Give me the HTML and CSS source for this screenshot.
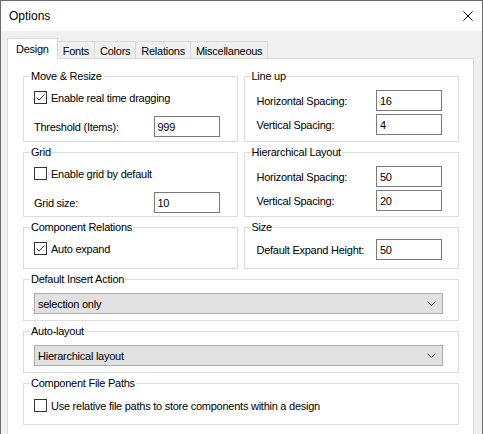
FILE: index.html
```html
<!doctype html>
<html>
<head>
<title>Options</title>
<link rel="stylesheet" href="styles.css">
</head>
<body>
<div class="window">
	<div class="titlebar">
		<span class="title">Options</span>
		<svg class="close" width="10" height="10" viewBox="0 0 10 10"><path d="M0.5 0.5 L9.5 9.5 M9.5 0.5 L0.5 9.5" stroke="#000" stroke-width="1" fill="none"/></svg>
	</div>
	<div class="tabs">
		<div class="tab selected">Design</div>
		<div class="tab">Fonts</div>
		<div class="tab">Colors</div>
		<div class="tab">Relations</div>
		<div class="tab">Miscellaneous</div>
	</div>
	<div class="panel">
		<div class="row">
			<div class="group left move">
				<span class="group-title">Move &amp; Resize</span>
				<label class="check"><span class="box checked"><svg width="11" height="11" viewBox="0 0 11 11"><path d="M1.5 5.5 L4 8 L9.5 2.5" stroke="#333" fill="none"/></svg></span>Enable real time dragging</label>
				<div class="field next"><span>Threshold (Items):</span><div class="input">999</div></div>
			</div>
			<div class="group right spacing">
				<span class="group-title">Line up</span>
				<div class="field"><span>Horizontal Spacing:</span><div class="input">16</div></div>
				<div class="field near"><span>Vertical Spacing:</span><div class="input">4</div></div>
			</div>
		</div>
		<div class="row">
			<div class="group left move">
				<span class="group-title">Grid</span>
				<label class="check"><span class="box"></span>Enable grid by default</label>
				<div class="field next"><span>Grid size:</span><div class="input">10</div></div>
			</div>
			<div class="group right spacing">
				<span class="group-title">Hierarchical Layout</span>
				<div class="field"><span>Horizontal Spacing:</span><div class="input">50</div></div>
				<div class="field near"><span>Vertical Spacing:</span><div class="input">20</div></div>
			</div>
		</div>
		<div class="row short">
			<div class="group left">
				<span class="group-title">Component Relations</span>
				<label class="check"><span class="box checked"><svg width="11" height="11" viewBox="0 0 11 11"><path d="M1.5 5.5 L4 8 L9.5 2.5" stroke="#333" fill="none"/></svg></span>Auto expand</label>
			</div>
			<div class="group right size">
				<span class="group-title">Size</span>
				<div class="field"><span>Default Expand Height:</span><div class="input">50</div></div>
			</div>
		</div>
		<div class="group wide">
			<span class="group-title">Default Insert Action</span>
			<div class="combo"><span>selection only</span><svg width="9" height="5" viewBox="0 0 9 5"><path d="M0.5 0.5 L4.5 4.5 L8.5 0.5" stroke="#555" fill="none"/></svg></div>
		</div>
		<div class="group wide">
			<span class="group-title">Auto-layout</span>
			<div class="combo"><span>Hierarchical layout</span><svg width="9" height="5" viewBox="0 0 9 5"><path d="M0.5 0.5 L4.5 4.5 L8.5 0.5" stroke="#555" fill="none"/></svg></div>
		</div>
		<div class="group wide paths">
			<span class="group-title">Component File Paths</span>
			<label class="check"><span class="box"></span>Use relative file paths to store components within a design</label>
		</div>
	</div>
</div>
</body>
</html>
```

FILE: styles.css
```css
* {
	box-sizing: border-box;
	margin: 0;
	padding: 0;
}

body {
	font-family: "Liberation Sans", Arial, sans-serif;
	font-size: 11px;
	letter-spacing: -0.25px;
	color: #000;
}

.window {
	width: 483px;
	height: 434px;
	overflow: hidden;
	background: #f0f0f0;
	border: 1px solid #6b6b6b;
	border-bottom: none;
}

.titlebar {
	align-items: center;
	background: #fff;
	display: flex;
	height: 30px;
	justify-content: space-between;
	padding: 0 9px 0 8px;
}

.title {
	font-size: 12px;
	letter-spacing: 0;
}

.tabs {
	align-items: flex-end;
	display: flex;
	height: 20px;
	margin: 7px 0 0 6px;
}

.tab {
	align-items: center;
	background: #f0f0f0;
	border: 1px solid #d9d9d9;
	border-bottom: none;
	border-left: none;
	display: flex;
	height: 17px;
	padding: 2px 5px 0 5px;
}

.tab.selected {
	background: #fff;
	border-left: 1px solid #d9d9d9;
	height: 21px;
	margin-bottom: -1px;
	padding: 0 8px 1px 8px;
	position: relative;
	z-index: 1;
}

.panel {
	background: #fff;
	border: 1px solid #d9d9d9;
	display: flex;
	flex-direction: column;
	gap: 10px;
	height: 400px;
	margin-left: 6px;
	padding: 17px 14px 0 15px;
	width: 467px;
}

.row {
	display: flex;
	gap: 6px;
	height: 66px;
}

.row + .row {
	height: 65px;
}

.row.short {
	height: 42px;
}

.group {
	border: 1px solid #dcdcdc;
	flex: 1;
	padding-top: 13px;
	position: relative;
}

.group-title {
	background: #fff;
	left: 6px;
	line-height: 13px;
	padding: 0 1px;
	position: absolute;
	top: -7px;
}

.group.left {
	padding: 14px 17px 0 10px;
}

.group.right {
	padding: 13px 16px 0 12px;
}

.group.size {
	padding-top: 11px;
}

.group.wide {
	flex: none;
	height: 42px;
	padding: 13px 15px 0 10px;
}

.group.paths {
	padding-top: 15px;
}

.check {
	align-items: center;
	display: flex;
	height: 13px;
}

.box {
	align-items: center;
	background: #fff;
	border: 1px solid #333;
	display: flex;
	height: 13px;
	justify-content: center;
	margin-right: 4px;
	width: 13px;
}

.field {
	align-items: center;
	display: flex;
	justify-content: space-between;
}

.field.next {
	margin-top: 12px;
}

.field.near {
	margin-top: 3px;
}

.input {
	align-items: center;
	border: 1px solid #7a7a7a;
	display: flex;
	height: 21px;
	padding-left: 3px;
	width: 66px;
}

.combo {
	align-items: center;
	background: #e1e1e1;
	border: 1px solid #adadad;
	display: flex;
	height: 21px;
	justify-content: space-between;
	padding: 0 6px 0 3px;
}
```
